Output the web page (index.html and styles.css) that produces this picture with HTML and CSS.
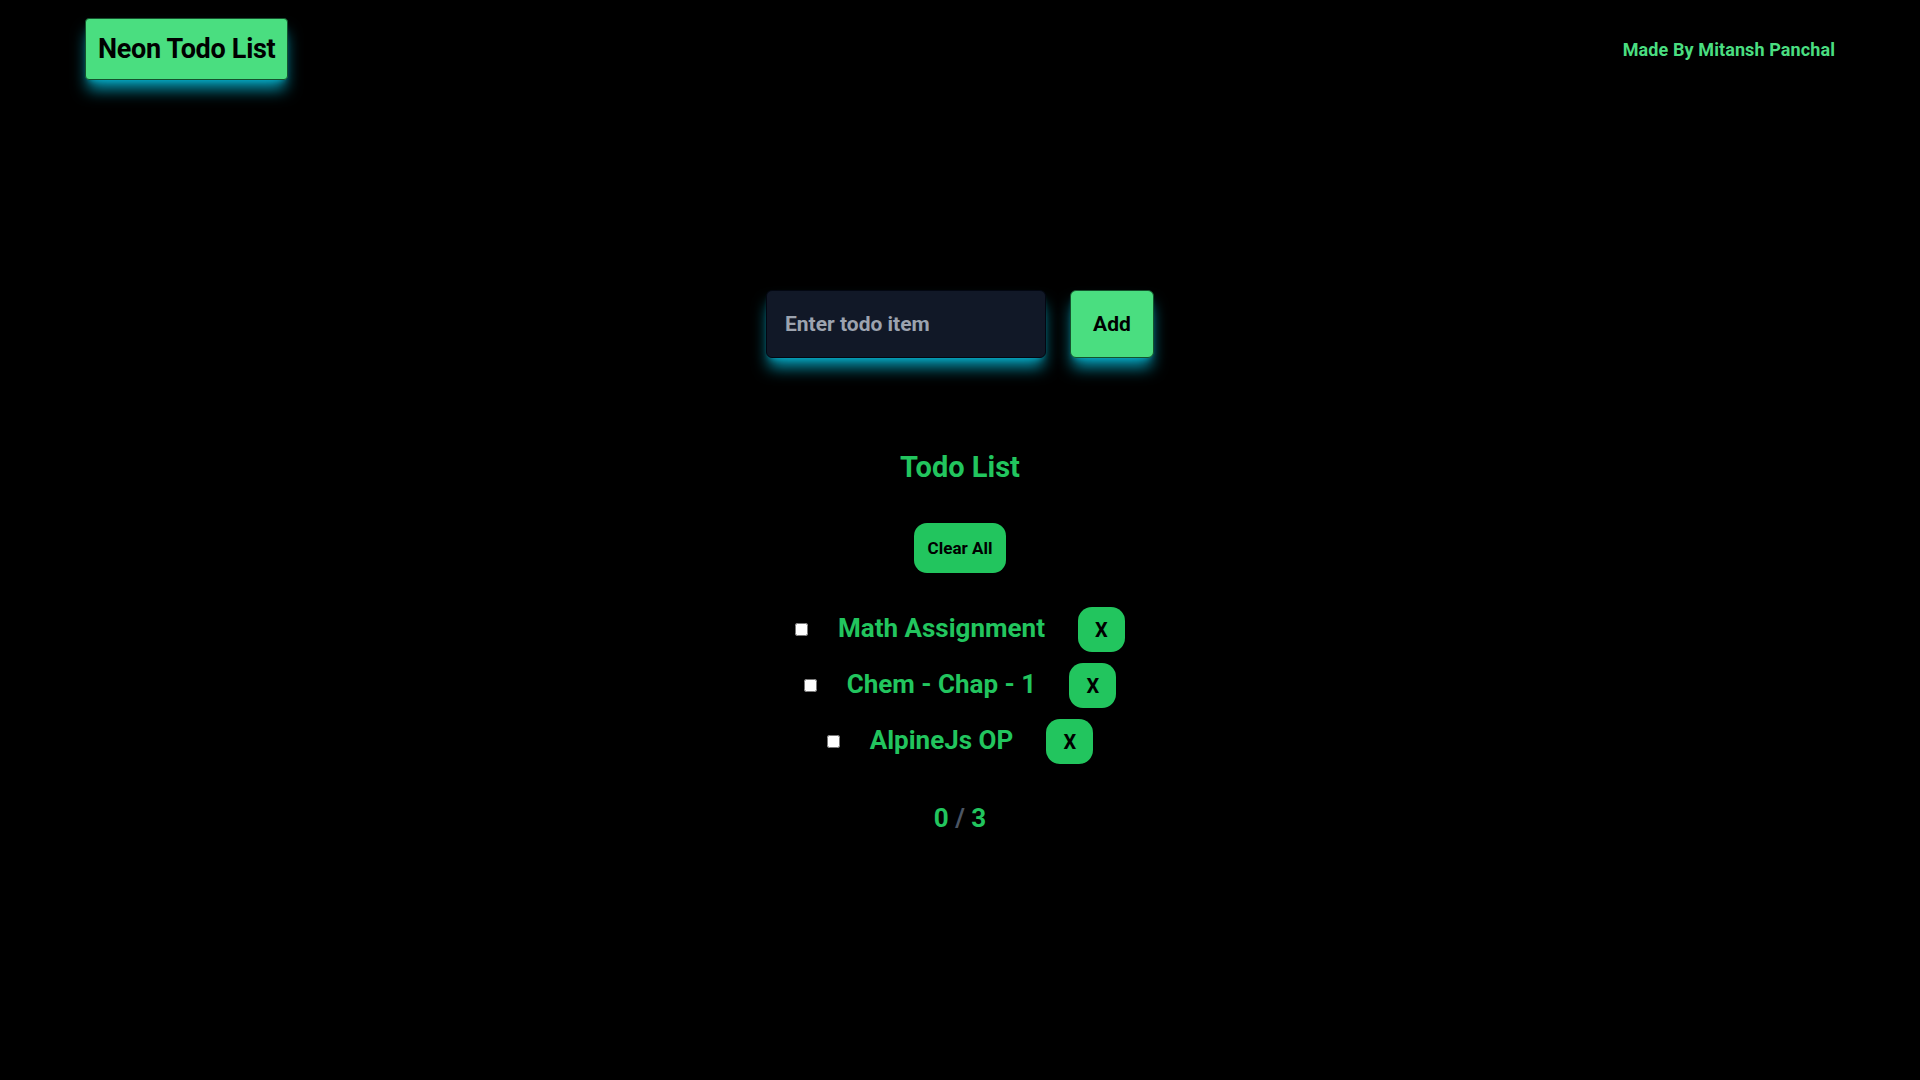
FILE: index.html
```html
<!DOCTYPE html>
<html lang="en">
<head>
<meta charset="utf-8">
<title>Neon Todo List</title>
<link rel="stylesheet" href="styles.css">
</head>
<body>
<header class="topbar">
  <div class="logo">Neon Todo List</div>
  <div class="credit">Made By Mitansh Panchal</div>
</header>
<main class="app">
  <form class="add-form" onsubmit="return false">
    <input class="todo-input" type="text" placeholder="Enter todo item">
    <button class="add-btn" type="submit">Add</button>
  </form>
  <h2 class="list-title">Todo List</h2>
  <button class="clear-btn" type="button">Clear All</button>
  <ul class="todos">
    <li class="todo"><input type="checkbox" class="check"><span class="todo-text">Math Assignment</span><button class="del-btn" type="button">X</button></li>
    <li class="todo"><input type="checkbox" class="check"><span class="todo-text">Chem - Chap - 1</span><button class="del-btn" type="button">X</button></li>
    <li class="todo"><input type="checkbox" class="check"><span class="todo-text">AlpineJs OP</span><button class="del-btn" type="button">X</button></li>
  </ul>
  <div class="count"><span>0</span> <span class="slash">/</span> <span>3</span></div>
</main>
</body>
</html>
```
FILE: styles.css
```css
* { box-sizing: border-box; }
html, body {
  margin: 0;
  background: #000;
  min-height: 100vh;
}
body {
  font-family: Roboto, "Noto Sans", sans-serif;
  font-weight: 700;
}
.topbar {
  height: 98px;
  padding: 18px 85px 0 85px;
  display: flex;
  justify-content: space-between;
  align-items: flex-start;
}
.logo {
  height: 62px;
  padding: 0 12px;
  display: flex;
  align-items: center;
  background: #4ade80;
  color: #000;
  font-size: 27px;
  letter-spacing: -0.3px;
  border: 1px solid #14532d;
  border-radius: 4px;
  box-shadow: 0 12px 16px -3px rgba(6, 182, 212, 0.85), 0 4px 6px -4px rgba(6, 182, 212, 0.8);
}
.credit {
  height: 62px;
  display: flex;
  align-items: center;
  color: #4ade80;
  font-size: 18px;
  letter-spacing: 0.1px;
}
.app {
  display: flex;
  flex-direction: column;
  align-items: center;
  padding-top: 192px;
}
.add-form {
  display: flex;
  gap: 24px;
  margin: 0;
}
.todo-input {
  width: 280px;
  height: 68px;
  padding: 0 18px;
  background: #111827;
  color: #e5e7eb;
  border: 1px solid #030712;
  border-radius: 6px;
  font-family: inherit;
  font-weight: 700;
  font-size: 21px;
  outline: none;
  box-shadow: 0 12px 16px -3px rgba(6, 182, 212, 0.85), 0 4px 6px -4px rgba(6, 182, 212, 0.8);
}
.todo-input::placeholder { color: #9ca3af; }
.add-btn {
  width: 84px;
  height: 68px;
  background: #4ade80;
  color: #000;
  border: 1px solid #14532d;
  border-radius: 6px;
  font-family: inherit;
  font-weight: 700;
  font-size: 21px;
  cursor: pointer;
  box-shadow: 0 12px 16px -3px rgba(6, 182, 212, 0.85), 0 4px 6px -4px rgba(6, 182, 212, 0.8);
}
.list-title {
  margin: 92px 0 0 0;
  height: 36px;
  line-height: 34px;
  font-size: 29px;
  color: #22c55e;
  font-weight: 700;
}
.clear-btn {
  margin-top: 37px;
  width: 92px;
  height: 50px;
  border: none;
  border-radius: 13px;
  background: #22c55e;
  color: #000;
  font-family: inherit;
  font-weight: 700;
  font-size: 17px;
  cursor: pointer;
}
.todos {
  list-style: none;
  margin: 34px 0 0 0;
  padding: 0;
  display: flex;
  flex-direction: column;
  align-items: center;
  gap: 11px;
}
.todo {
  display: flex;
  align-items: center;
  height: 45px;
}
.check {
  width: 13px;
  height: 13px;
  margin: 0 30px 0 0;
}
.todo-text {
  color: #22c55e;
  font-size: 26px;
  margin-right: 33px;
  line-height: 1;
  padding-bottom: 4px;
}
.del-btn {
  width: 47px;
  height: 45px;
  border: none;
  border-radius: 14px;
  background: #22c55e;
  color: #000;
  font-family: inherit;
  font-weight: 700;
  font-size: 20px;
  cursor: pointer;
}
.count {
  margin-top: 38px;
  height: 32px;
  line-height: 32px;
  font-size: 26px;
  color: #22c55e;
}
.slash { color: #4b5563; }
```
